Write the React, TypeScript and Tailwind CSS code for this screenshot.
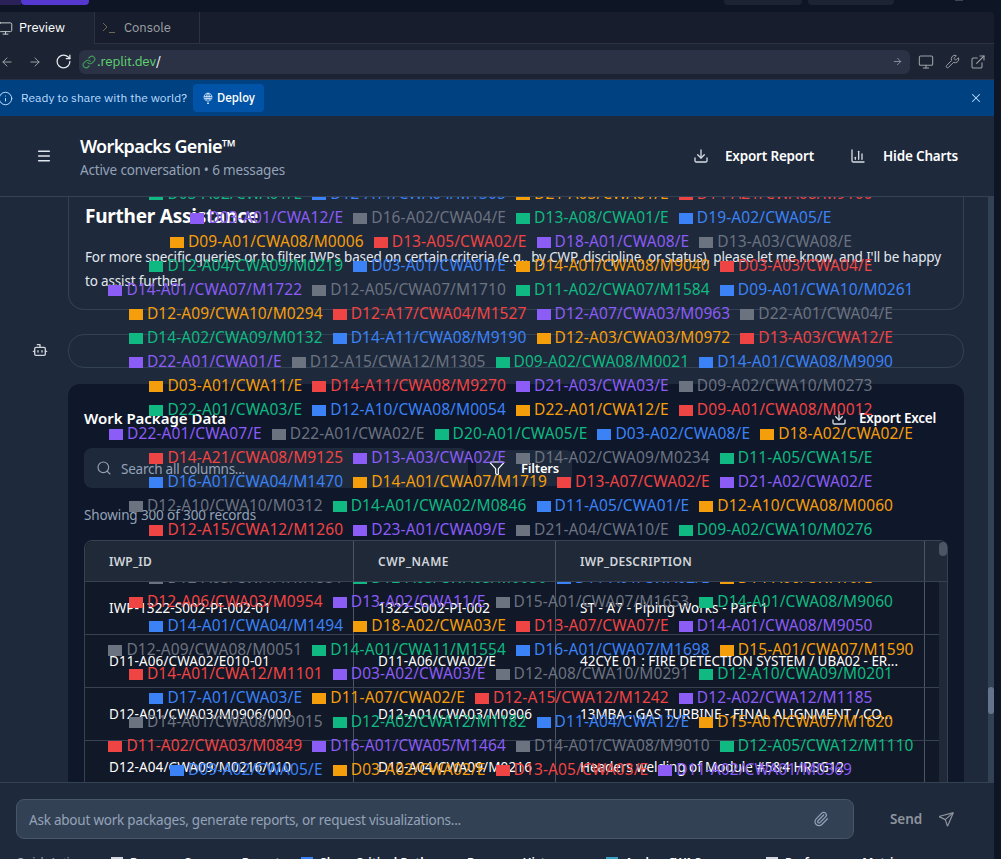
import { useLayoutEffect, useRef, type ReactNode } from "react";
import {
  ArrowLeft, ArrowRight, Bot, ChartColumn, Download, ExternalLink, Filter, Info, Link2,
  Menu, Monitor, Paperclip, RotateCw, Search, Send, Wrench, X,
} from "lucide-react";

/* Text run whose letter spacing is adjusted so that it takes a set width. */
function Run({ width, className = "", children }: { width: number; className?: string; children: string }) {
  const ref = useRef<HTMLSpanElement>(null);
  useLayoutEffect(() => {
    const el = ref.current;
    if (!el) return;
    el.style.letterSpacing = "0px";
    const natural = el.getBoundingClientRect().width;
    el.style.letterSpacing = `${(width - natural) / children.length}px`;
  }, [width, children]);
  return <span ref={ref} className={`inline-block shrink-0 whitespace-nowrap ${className}`}>{children}</span>;
}

const swatches = ["bg-[#10b981]", "bg-[#3b82f6]", "bg-[#f59e0b]", "bg-[#ef4444]", "bg-[#8b5cf6]", "bg-[#6b7280]"];
const inks = ["text-[#10b981]", "text-[#3b82f6]", "text-[#f59e0b]", "text-[#ef4444]", "text-[#8b5cf6]", "text-[#6b7280]"];

const legendRows: [number, string][] = [
  [0, "D03-A02/CWA01/E D12-A11/CWA04/M1305 D21-A03/CWA01/E D14-A21/CWA08/M9100"],
  [4, "D03-A01/CWA12/E D16-A02/CWA04/E D13-A08/CWA01/E D19-A02/CWA05/E"],
  [2, "D09-A01/CWA08/M0006 D13-A05/CWA02/E D18-A01/CWA08/E D13-A03/CWA08/E"],
  [0, "D12-A04/CWA09/M0219 D03-A01/CWA01/E D14-A01/CWA08/M9040 D03-A03/CWA04/E"],
  [4, "D14-A01/CWA07/M1722 D12-A05/CWA07/M1710 D11-A02/CWA07/M1584 D09-A01/CWA10/M0261"],
  [2, "D12-A09/CWA10/M0294 D12-A17/CWA04/M1527 D12-A07/CWA03/M0963 D22-A01/CWA04/E"],
  [0, "D14-A02/CWA09/M0132 D14-A11/CWA08/M9190 D12-A03/CWA03/M0972 D13-A03/CWA12/E"],
  [4, "D22-A01/CWA01/E D12-A15/CWA12/M1305 D09-A02/CWA08/M0021 D14-A01/CWA08/M9090"],
  [2, "D03-A01/CWA11/E D14-A11/CWA08/M9270 D21-A03/CWA03/E D09-A02/CWA10/M0273"],
  [0, "D22-A01/CWA03/E D12-A10/CWA08/M0054 D22-A01/CWA12/E D09-A01/CWA08/M0012"],
  [4, "D22-A01/CWA07/E D22-A01/CWA02/E D20-A01/CWA05/E D03-A02/CWA08/E D18-A02/CWA02/E"],
  [3, "D14-A21/CWA08/M9125 D13-A03/CWA02/E D14-A02/CWA09/M0234 D11-A05/CWA15/E"],
  [1, "D16-A01/CWA04/M1470 D14-A01/CWA07/M1719 D13-A07/CWA02/E D21-A02/CWA02/E"],
  [5, "D12-A10/CWA10/M0312 D14-A01/CWA02/M0846 D11-A05/CWA01/E D12-A10/CWA08/M0060"],
  [3, "D12-A15/CWA12/M1260 D23-A01/CWA09/E D21-A04/CWA10/E D09-A02/CWA10/M0276"],
  [1, ""],
  [5, "D12-A05/CWA11/M1331 D12-A03/CWA03/M0050 D11-A01/CWA02/E D14-A06/CWA10/E"],
  [3, "D12-A06/CWA03/M0954 D13-A02/CWA11/E D15-A01/CWA07/M1653 D14-A01/CWA08/M9060"],
  [1, "D14-A01/CWA04/M1494 D18-A02/CWA03/E D13-A07/CWA07/E D14-A01/CWA08/M9050"],
  [5, "D12-A09/CWA08/M0051 D14-A01/CWA11/M1554 D16-A01/CWA07/M1698 D15-A01/CWA07/M1590"],
  [3, "D14-A01/CWA12/M1101 D03-A02/CWA03/E D12-A08/CWA10/M0291 D12-A10/CWA09/M0201"],
  [1, "D17-A01/CWA03/E D11-A07/CWA02/E D12-A15/CWA12/M1242 D12-A02/CWA12/M1185"],
  [5, "D14-A01/CWA08/M9015 D12-A02/CWA12/M1182 D11-A04/CWA12/E D15-A01/CWA07/M1620"],
  [3, "D11-A02/CWA03/M0849 D16-A01/CWA05/M1464 D14-A01/CWA08/M9010 D12-A05/CWA12/M1110"],
  [1, "D09-A02/CWA05/E D03-A02/CWA02/E D13-A05/CWA03/E D11-A02/CWA01/M0369"],
];

function Legend() {
  return (
    <div className="pointer-events-none absolute top-[-16px] left-[68px] z-10 w-[896px] text-[15.5px]">
      {legendRows.map(([first, line], r) => (
        <div key={r} className="flex h-6 items-center justify-center">
          {line.split(" ").filter(Boolean).map((name, i) => {
            const c = (first + i) % 6;
            const long = name.length > 15;
            return (
              <div key={name} className={`flex shrink-0 items-center ${long ? "w-[203.8px]" : "w-[162.8px]"}`}>
                <i className={`mt-[3px] mr-1 h-[11px] w-[14px] shrink-0 ${swatches[c]}`} />
                <Run width={long ? 175.8 : 134.8} className={`leading-6 ${inks[c]}`}>{name}</Run>
              </div>
            );
          })}
        </div>
      ))}
    </div>
  );
}

const rows: [string, number, string, number, string, number][] = [
  ["IWP-1322-S002-PI-002-01", 162, "1322-S002-PI-002", 112, "ST - A7 - Piping Works - Part 1", 188],
  ["D11-A06/CWA02/E010-01", 161, "D11-A06/CWA02/E", 118, "42CYE 01 : FIRE DETECTION SYSTEM / UBA02 - ER...", 318],
  ["D12-A01/CWA03/M0906/000", 182, "D12-A01/CWA03/M0906", 154, "13MBA : GAS TURBINE - FINAL ALIGNMENT / CO...", 312],
  ["D12-A04/CWA09/M0216/010", 182, "D12-A04/CWA09/M0216", 154, "Headers welding of Module #5&4 HRSG12", 264],
];

function Cell({ children, className = "" }: { children?: ReactNode; className?: string }) {
  return <div className={`flex shrink-0 items-center pl-6 ${className}`}>{children}</div>;
}

function DataTable() {
  return (
    <div className="relative mt-[14px] flex h-[400px] w-[864px] flex-col overflow-visible rounded-lg border border-[#374151] bg-[#111827]">
      <div className="relative z-20 flex h-[41px] shrink-0 rounded-t-lg border-b border-[#374151] bg-[#1f2937] text-[12px] font-semibold text-[#d1d5db]">
        <Cell className="w-[269px] border-r border-[#4b5563] pt-[2px]"><Run width={43}>IWP_ID</Run></Cell>
        <Cell className="w-[202px] border-r border-[#4b5563] pt-[2px]"><Run width={71}>CWP_NAME</Run></Cell>
        <Cell className="w-[369px] border-r border-[#4b5563] pt-[2px]"><Run width={112}>IWP_DESCRIPTION</Run></Cell>
        <i className="ml-auto mt-px h-[14px] w-2 rounded-full bg-[#4b5563]" />
      </div>
      <div className="flex flex-1">
        <div className="w-[854px] text-[13.5px] text-white">
          {rows.map(([a, aw, b, bw, c, cw]) => (
            <div key={a} className="flex h-[53px] border-b border-[#374151]">
              <Cell className="w-[269px] border-r border-[#4b5563]"><Run width={aw}>{a}</Run></Cell>
              <Cell className="w-[202px] border-r border-[#4b5563]"><Run width={bw}>{b}</Run></Cell>
              <Cell className="w-[369px] border-r border-[#4b5563]"><Run width={cw}>{c}</Run></Cell>
            </div>
          ))}
        </div>
        <div className="flex-1 bg-[#1f2937]" />
      </div>
    </div>
  );
}

function BrowserChrome() {
  return (
    <div className="shrink-0 font-['IBM_Plex_Sans','Noto_Sans',sans-serif]">
      <div className="flex h-8 text-[13px]">
        <div className="flex w-[95px] items-center border-r border-[#2b3245] bg-[#1c2333] text-white">
          <Monitor size={15} strokeWidth={1.6} className="-ml-[2px] mr-[6px] text-[#c2c8cc]" />
          <Run width={46}>Preview</Run>
        </div>
        <div className="flex w-[105px] items-center border-r border-b border-[#2b3245] pl-[7px] text-[#9da2a6]">
          <svg width="14" height="14" viewBox="0 0 14 14" fill="none" stroke="#6f6a50" className="mr-[8px]"><path d="M1 2l4 4-4 4M7 11.500h6" /></svg>
          <Run width={47}>Console</Run>
        </div>
        <div className="flex-1 border-b border-[#2b3245]" />
      </div>
      <div className="flex h-9 items-center border-b border-[#2b3245] bg-[#1c2333] text-[#9da2a6]">
        <ArrowLeft size={14} strokeWidth={1.7} className="shrink-0" />
        <ArrowRight size={14} strokeWidth={1.7} className="ml-[14px] shrink-0" />
        <RotateCw size={17} strokeWidth={1.8} className="ml-[13px] mr-[7px] shrink-0 text-[#e5e7eb]" />
        <div className="flex h-6 w-[831px] shrink-0 items-center rounded-md bg-[#2b3245] px-[3px] text-[13.5px] text-[#5fd16f]">
          <svg width="14" height="14" viewBox="0 0 24 24" fill="none" stroke="#3f9a56" strokeWidth="2" strokeLinecap="round" className="mr-px shrink-0">
            <path d="M10 13a5 5 0 0 0 7.540.540l3-3a5 5 0 0 0-7.070-7.070l-1.720 1.710M14 11a5 5 0 0 0-7.540-.540l-3 3a5 5 0 0 0 7.070 7.070l1.710-1.710" />
          </svg>
          <Run width={59}>.replit.dev</Run>
          <span className="text-white">/</span>
          <ArrowRight size={11} className="mr-1 ml-auto text-[#8b93a1]" />
        </div>
        <Monitor size={16} strokeWidth={1.6} className="ml-2 shrink-0" />
        <Wrench size={15} strokeWidth={1.6} className="ml-[11px] shrink-0" />
        <ExternalLink size={16} strokeWidth={1.6} className="ml-[10px] shrink-0" />
      </div>
      <div className="flex h-9 items-center bg-[#004182] text-[12px] text-[#b9dcff]">
        <Info size={15} strokeWidth={1.6} className="-ml-[2px] mr-[8px]" />
        <Run width={166}>Ready to share with the world?</Run>
        <div className="ml-[6px] flex h-7 w-[71px] items-center rounded bg-[#0053a6] pl-[9px] text-white">
          <svg width="12" height="12" viewBox="0 0 12 12" fill="none" stroke="#d5e9ff" strokeWidth=".8" className="mr-[3px]">
            <path d="M4.5 8.8A4 4 0 1 1 7.500 8.800M6 1v11M2 4.500h8M2.500 6.500h7M4.500 8.500C3.500 5 4.500 2 6 1c1.500 1 2.500 4 1.500 7.500M5 11.500h2" />
          </svg>
          <Run width={38} className="font-medium">Deploy</Run>
        </div>
        <X size={14} strokeWidth={1.8} className="mr-[11px] ml-auto" />
      </div>
    </div>
  );
}

const actions: { gap: string; icon?: string; label: string; width: number }[] = [
  { gap: "w-[95px]", icon: "bg-[#d3d6e0]", label: "Resource Summary Report", width: 150 },
  { gap: "w-[21px]", icon: "bg-[#3b82f6]", label: "Show Critical Path", width: 108 },
  { gap: "w-[39px]", label: "Resource Histogram", width: 116 },
  { gap: "w-[23px]", icon: "bg-[#38a3c7]", label: "Analyze CWA Sequence", width: 120 },
  { gap: "w-[21px]", icon: "bg-[#d3d6e0]", label: "Performance Metrics", width: 120 },
];

export default function App() {
  return (
    <div className="h-[859px] w-[1001px] overflow-hidden bg-[#0e1525] font-['Noto_Sans','Open_Sans',sans-serif]">
      <div className="flex h-3 items-start">
        <i className="h-[5px] w-[21px] bg-[#2a2159]" />
        <i className="h-[5px] w-[68px] rounded-b bg-[#5438d0]" />
        <i className="ml-[635px] h-[5px] w-[78px] rounded-b bg-[#1c2333]" />
        <i className="ml-[6px] h-[5px] w-[86px] rounded-b bg-[#1c2333]" />
        <i className="ml-[61px] h-px w-2 bg-[#3c445c]" />
      </div>
      <div className="flex h-[847px] w-[994px] flex-col overflow-hidden rounded-tr bg-[#171d2d]">
        <BrowserChrome />
        <header className="flex h-[81px] shrink-0 items-center border-b border-[#334155] bg-[#1e293b] text-white">
          <Menu size={16} strokeWidth={2.3} className="mr-7 ml-9 text-[#e2e8f0]" />
          <div className="pt-1">
            <div className="h-6 text-[18px] leading-6 font-semibold"><Run width={155}>Workpacks Genie™</Run></div>
            <div className="h-6 text-[13.500px] leading-6 text-[#94a3b8]"><Run width={205}>Active conversation • 6 messages</Run></div>
          </div>
          <div className="mr-9 ml-auto flex items-center text-[13.500px] font-semibold">
            <Download size={16} className="mr-4 text-[#d5dbe4]" />
            <Run width={89}>Export Report</Run>
            <ChartColumn size={16} className="mr-[17px] ml-[36px] text-[#d5dbe4]" />
            <Run width={75}>Hide Charts</Run>
          </div>
        </header>

        <main className="relative flex h-[585px] shrink-0 overflow-hidden bg-[#1e293b]">
          <div className="flex w-[68px] shrink-0 pt-[145px] pl-8">
            <Bot size={16} strokeWidth={2} className="text-[#d1d5db]" />
          </div>
          <div className="w-[896px] shrink-0">
            <section className="h-[113px] rounded-b-2xl border border-t-0 border-[#334155] pt-[7px] pl-4">
              <h2 className="h-6 text-[19px] leading-6 font-bold text-white"><Run width={173}>Further Assistance</Run></h2>
              <div className="mt-[17px] text-[13.500px] leading-6 text-[#e2e8f0]">
                <div className="h-6"><Run width={856}>For more specific queries or to filter IWPs based on certain criteria (e.g., by CWP, discipline, or status), please let me know, and I'll be happy</Run></div>
                <div className="h-6"><Run width={99}>to assist further.</Run></div>
              </div>
            </section>
            <section className="mt-6 h-[34px] rounded-2xl border border-[#334155]" />
            <section className="mt-4 h-[560px] rounded-xl bg-[#0f172a] px-4 pt-[22px] text-white">
              <div className="flex h-6 items-center justify-between pr-3">
                <Run width={142} className="text-[15px] font-semibold">Work Package Data</Run>
                <div className="flex items-center text-[13.500px] font-semibold">
                  <Download size={16} className="mr-[12px] text-[#d5dbe4]" />
                  <Run width={77}>Export Excel</Run>
                </div>
              </div>
              <div className="mt-[18px] flex items-center gap-2">
                <div className="flex h-10 w-[384px] items-center rounded-lg bg-[#1e293b] pl-3 text-[13.500px] text-[#94a3b8]">
                  <Search size={16} strokeWidth={1.700} className="mr-[9px]" />
                  <Run width={124} className="pt-[2px]">Search all columns...</Run>
                </div>
                <div className="flex h-9 w-24 items-center rounded-md bg-[#1e293b] pl-[13px] text-[13px] font-semibold">
                  <Filter size={16} strokeWidth={1.800} className="mr-4" />
                  <Run width={38} className="pt-px">Filters</Run>
                </div>
              </div>
              <div className="mt-[17px] h-[21px] text-[13.500px] leading-[21px] text-[#94a3b8]"><Run width={172}>Showing 300 of 300 records</Run></div>
              <DataTable />
            </section>
          </div>
          <Legend />
          <div className="ml-auto w-[6px] bg-[#334155] pt-[490px]"><i className="block h-[27px] rounded-full bg-[#64748b]" /></div>
        </main>

        <footer className="relative z-20 h-[77px] shrink-0 overflow-hidden border-t border-[#334155] bg-[#1e293b] pt-4">
          <div className="flex items-center pl-4">
            <div className="flex h-10 w-[838px] items-center rounded-lg border border-[#475569] bg-[#334155] px-3 text-[13.500px] text-[#94a3b8]">
              <Run width={432} className="pt-[2px]">Ask about work packages, generate reports, or request visualizations...</Run>
              <Paperclip size={16} strokeWidth={1.800} className="mr-3 ml-auto" />
            </div>
            <div className="ml-9 flex items-center text-[13.500px] font-semibold text-[#8e949d]">
              <Run width={32}>Send</Run>
              <Send size={16} strokeWidth={1.800} className="ml-4 rotate-[4deg]" />
            </div>
          </div>
          <div className="mt-[14px] flex h-5 items-center pl-4 text-[12px] whitespace-nowrap text-white">
            <div className="relative w-0"><Run width={76} className="-translate-y-1/2 absolute top-1/2 text-[#94a3b8]">Quick Actions:</Run></div>
            {actions.map((a) => (
              <div key={a.label} className="flex items-center font-semibold">
                <i className={`shrink-0 ${a.gap}`} />
                {a.icon && <i className={`mr-[7px] h-3 w-3 shrink-0 ${a.icon}`} />}
                <Run width={a.width}>{a.label}</Run>
              </div>
            ))}
          </div>
        </footer>
      </div>
    </div>
  );
}
